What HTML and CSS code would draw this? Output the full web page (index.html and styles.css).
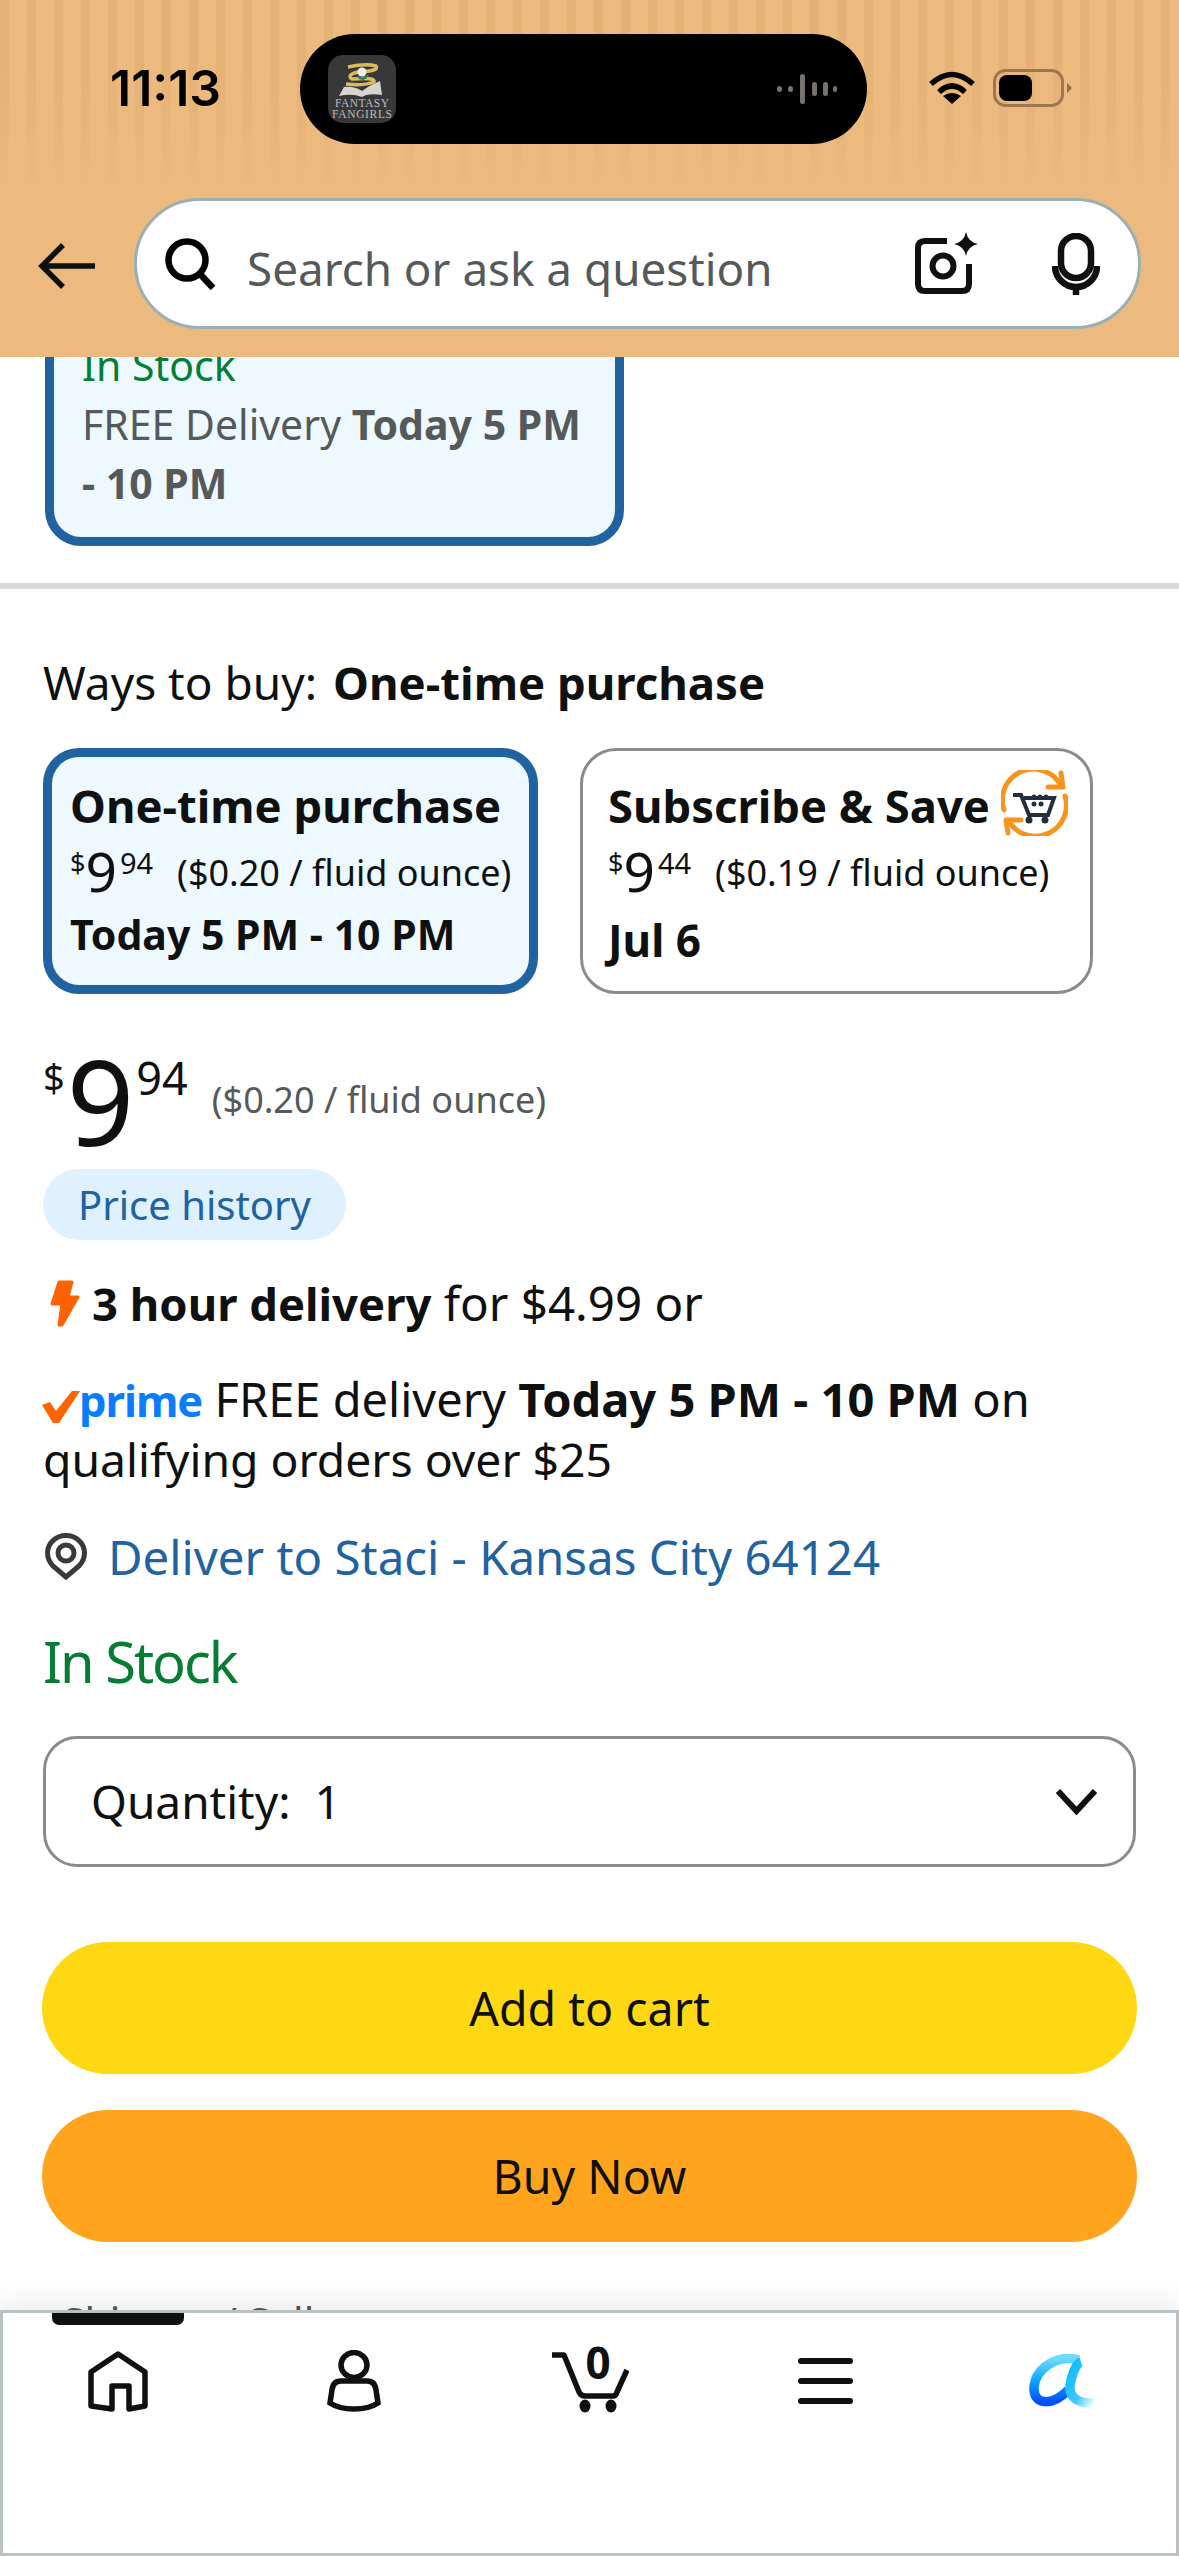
FILE: index.html
```html
<!DOCTYPE html>
<html lang="en">
<head>
<meta charset="utf-8">
<title>Product buying options</title>
<link rel="stylesheet" href="styles.css">
</head>
<body>
<div class="page">
  <header class="header">
    <div class="status">
      <span class="time">11:13</span>
      <div class="island">
        <svg class="app-icon" viewBox="0 0 68 68" width="68" height="68">
          <rect width="68" height="68" rx="15" fill="#38383a"/>
          <path d="M20 12 Q38 8 48 11 Q52 16 30 17 Q18 20 24 24 Q48 22 46 27 Q36 31 18 29" fill="none" stroke="#d9bb5c" stroke-width="3.5"/>
          <circle cx="34" cy="17" r="4.5" fill="#eee"/>
          <path d="M30 21 Q34 27 40 20" fill="none" stroke="#2f7d5d" stroke-width="2.5"/>
          <path d="M11 41 L16 32 Q26 31 34 36 Q42 30 52 26 L54 40 Q40 38 34 42 Q24 38 11 41Z" fill="#d8d4ce"/>
          <text x="34" y="52" class="app-text" text-anchor="middle" textLength="54">FANTASY</text>
          <text x="34" y="63" class="app-text" text-anchor="middle" textLength="60">FANGIRLS</text>
        </svg>
        <svg class="wave" viewBox="0 0 60 30" width="60" height="30" fill="#77736c">
          <rect x="0" y="12" width="5" height="6" rx="2.5"/>
          <rect x="11" y="12" width="5" height="6" rx="2.5"/>
          <rect x="23" y="0" width="5" height="30" rx="2.5"/>
          <rect x="35" y="8" width="5" height="14" rx="2.5"/>
          <rect x="46" y="8" width="5" height="14" rx="2.5"/>
          <rect x="56" y="12" width="4" height="6" rx="2"/>
        </svg>
      </div>
      <div class="status-right">
        <svg viewBox="0 0 48 36" width="48" height="36" fill="none" stroke="#000" stroke-width="5.5">
          <path d="M3 15 Q24 -4 45 15"/>
          <path d="M11 23 Q24 11 37 23"/>
          <path d="M15 27 Q24 21 33 27 L24 35Z" fill="#000" stroke="none"/>
        </svg>
        <svg class="battery" viewBox="0 0 79 38" width="79" height="38">
          <rect x="1.5" y="1.5" width="68" height="35" rx="11" fill="none" stroke="#9b7850" stroke-width="3"/>
          <rect x="6" y="6" width="33" height="26" rx="8" fill="#000"/>
          <path d="M74 14 L79 19 L74 24Z" fill="#8f7048"/>
        </svg>
      </div>
    </div>
    <div class="searchrow">
      <svg class="back" viewBox="0 0 57 46" width="57" height="46" fill="none" stroke="#0f1111" stroke-width="5.5">
        <path d="M57 23 H5"/>
        <path d="M25 2 L4 23 L25 44"/>
      </svg>
      <div class="searchbox">
        <svg viewBox="0 0 53 52" width="53" height="52" fill="none" stroke="#000" stroke-width="6.5">
          <circle cx="22" cy="22" r="18.5"/>
          <path d="M35 36 L48 50"/>
        </svg>
        <span class="placeholder">Search or ask a question</span>
        <svg class="cam" viewBox="0 0 64 64" width="64" height="64" fill="none" stroke="#0f1111" stroke-width="6">
          <path d="M32 9 H10 Q3 9 3 16 V52 Q3 59 10 59 H47 Q54 59 54 52 V32"/>
          <circle cx="28" cy="34" r="10.5"/>
          <path d="M51 0 Q53 10 63 12 Q53 14 51 24 Q49 14 39 12 Q49 10 51 0Z" fill="#0f1111" stroke="none"/>
        </svg>
        <svg class="mic" viewBox="0 0 48 62" width="48" height="62" fill="none" stroke="#0f1111" stroke-width="6.5">
          <rect x="9" y="3" width="30" height="42" rx="15"/>
          <path d="M3 33 A21 21 0 0 0 45 33"/>
          <path d="M24 54 V62"/>
        </svg>
      </div>
    </div>
  </header>

  <main class="content">
    <div class="option-card top-card">
      <div class="stock-small">In Stock</div>
      <div class="muted">FREE Delivery <b>Today 5 PM<br>- 10 PM</b></div>
    </div>
    <div class="divider"></div>

    <section class="buy">
      <div class="ways">Ways to buy: <b>One-time purchase</b></div>
      <div class="choices">
        <div class="choice selected">
          <div class="choice-title">One-time purchase</div>
          <div class="choice-price">
            <span class="p-cur">$</span><span class="p-main">9</span><span class="p-frac">94</span>
            <span class="unit">($0.20 / fluid ounce)</span>
          </div>
          <div class="choice-date">Today 5 PM - 10 PM</div>
        </div>
        <div class="choice">
          <div class="choice-title sub-title">Subscribe &amp; Save
            <svg class="sns" viewBox="0 0 67 66" width="67" height="66" fill="none">
              <g stroke="#f7941d" stroke-width="5" stroke-linecap="round" stroke-linejoin="round">
                <path d="M3 40 A31 31 0 0 1 60 16"/>
                <path d="M60 3 L62 17 L47 17"/>
                <path d="M64 26 A31 31 0 0 1 9 53"/>
                <path d="M7 63 L5 50 L20 50"/>
              </g>
              <path d="M12 25 H20 L28 45 H47 L53 28 H23" stroke="#232f3e" stroke-width="4"/>
              <circle cx="28" cy="50" r="3.5" fill="#232f3e"/>
              <circle cx="44" cy="50" r="3.5" fill="#232f3e"/>
              <g fill="#232f3e">
                <circle cx="33" cy="27" r="2.5"/><circle cx="39" cy="27" r="2.5"/><circle cx="45" cy="27" r="2.5"/>
                <circle cx="33" cy="34" r="2.5"/><circle cx="40" cy="34" r="2.5"/>
              </g>
            </svg>
          </div>
          <div class="choice-price">
            <span class="p-cur">$</span><span class="p-main">9</span><span class="p-frac">44</span>
            <span class="unit">($0.19 / fluid ounce)</span>
          </div>
          <div class="choice-date date-plain">Jul 6</div>
        </div>
      </div>

      <div class="price">
        <span class="big-cur">$</span><span class="big-main">9</span><span class="big-frac">94</span>
        <span class="unit unit-muted">($0.20 / fluid ounce)</span>
      </div>
      <div class="history">Price history</div>

      <div class="line hour">
        <svg viewBox="0 0 30 47" width="30" height="47">
          <path d="M9 2 H22 L18 17 H28 L12 45 H9 L12 24 H2Z" fill="#ff6200" stroke="#ff6200" stroke-width="3" stroke-linejoin="round"/>
        </svg>
        <span><b>3 hour delivery</b> for $4.99 or</span>
      </div>
      <div class="prime-block">
        <svg class="check" viewBox="0 0 38 33" width="38" height="33">
          <path d="M0 14 L8 11 L14 20 L30 0 H38 L17 32 H11Z" fill="#ff6200"/>
        </svg><span class="prime">prime</span> FREE delivery <b>Today 5 PM - 10 PM</b> on <span class="qual">qualifying orders over $25</span>
      </div>
      <div class="deliver">
        <svg viewBox="0 0 42 47" width="42" height="47" fill="none" stroke="#3a3a3a" stroke-width="5">
          <path d="M21 44 L8 33 Q2.5 27 2.5 20 A18.5 17.5 0 0 1 39.5 20 Q39.5 27 34 33Z"/>
          <circle cx="21" cy="20" r="8"/>
        </svg>
        <span>Deliver to Staci - Kansas City 64124</span>
      </div>
      <div class="stock">In Stock</div>
      <div class="quantity">
        <span>Quantity:&nbsp; 1</span>
        <svg viewBox="0 0 41 27" width="41" height="27" fill="none" stroke="#0f1111" stroke-width="6">
          <path d="M2 3 L20.5 23 L39 3"/>
        </svg>
      </div>
      <div class="btn btn-cart">Add to cart</div>
      <div class="btn btn-buy">Buy Now</div>
      <div class="seller">Shipper / Seller</div>
    </section>
  </main>

  <nav class="nav">
    <div class="tab-mark"></div>
    <div class="nav-row">
      <svg viewBox="0 0 60 61" width="60" height="61" fill="none" stroke="#0f1111" stroke-width="5.5" stroke-linejoin="round">
        <path d="M3 21 L30 3 L57 21 V55 L41 58 V35 H24 V58 L3 55Z" />
      </svg>
      <svg viewBox="0 0 54 62" width="54" height="62" fill="none" stroke="#0f1111" stroke-width="5.5">
        <ellipse cx="27" cy="15" rx="13" ry="12.5"/>
        <path d="M14 31 H40 Q48 31 49 40 L51 53 Q42 59 27 59 Q12 59 3 53 L5 40 Q6 31 14 31Z"/>
      </svg>
      <div class="cart">
        <svg viewBox="0 0 78 67" width="78" height="67" fill="none" stroke="#0f1111" stroke-width="5.5" stroke-linejoin="round">
          <path d="M1 9 H13 L28 46 Q30 50 34 50 H62 Q65 50 66 46 L76 24"/>
          <ellipse cx="34" cy="60" rx="5.5" ry="6.5" fill="#0f1111" stroke="none"/>
          <ellipse cx="60" cy="60" rx="5.5" ry="6.5" fill="#0f1111" stroke="none"/>
        </svg>
        <span class="cart-count">0</span>
      </div>
      <svg viewBox="0 0 55 46" width="55" height="46" fill="#0f1111">
        <rect width="55" height="6" rx="3"/>
        <rect y="20" width="55" height="6" rx="3"/>
        <rect y="40" width="55" height="6" rx="3"/>
      </svg>
      <svg viewBox="0 0 66 54" width="66" height="54" fill="none">
        <defs>
          <linearGradient id="al1" x1="0" y1="0" x2="0" y2="1">
            <stop offset="0" stop-color="#6fdcff"/>
            <stop offset=".5" stop-color="#0aa8ff"/>
            <stop offset="1" stop-color="#0050ff"/>
          </linearGradient>
          <linearGradient id="al2" x1="0" y1="0" x2="1" y2="1">
            <stop offset="0" stop-color="#06bcff"/>
            <stop offset=".6" stop-color="#43c8ff"/>
            <stop offset="1" stop-color="#ffffff"/>
          </linearGradient>
        </defs>
        <path d="M50 6 C28 0 7 14 5 33 C4 52 24 52 39 36" stroke="url(#al1)" stroke-width="9.5"/>
        <path d="M52 8 C46 10 42 24 41 32 C40 44 50 50 66 49" stroke="url(#al2)" stroke-width="9.5"/>
      </svg>
    </div>
  </nav>
</div>
</body>
</html>
```
FILE: styles.css
```css
* { box-sizing: border-box; }
html, body { margin: 0; padding: 0; background: #fff; }
body { font-family: "Noto Sans", sans-serif; color: #0f1111; font-size: 46px; line-height: 59px; }
b { font-weight: 700; }

.page { width: 1179px; height: 2556px; display: flex; flex-direction: column; overflow: hidden; position: relative; }

/* header */
.header { height: 357px; flex: none; background: #ecb97f; position: relative; z-index: 2; }
.header::before {
  content: ""; position: absolute; inset: 0;
  background: repeating-linear-gradient(90deg, rgba(205,135,65,.15) 0 9px, transparent 9px 27px);
  -webkit-mask-image: linear-gradient(#000 0, #000 70px, transparent 190px);
  mask-image: linear-gradient(#000 0, #000 70px, transparent 190px);
}
.status { position: relative; height: 198px; }
.time { position: absolute; left: 110px; top: 60px; font: 600 50px/56px Inter, sans-serif; color: #000; }
.island { position: absolute; left: 300px; top: 34px; width: 567px; height: 110px; border-radius: 55px; background: #000; display: flex; align-items: center; justify-content: space-between; padding: 0 30px 0 28px; }
.app-text { font: 500 11.5px "Liberation Serif", serif; fill: #bdbbb6; }
.status-right { position: absolute; left: 928px; top: 69px; display: flex; gap: 17px; }

.searchrow { position: relative; display: flex; align-items: center; gap: 39px; padding-left: 38px; }
.back { flex: none; margin-top: 4px; }
.searchbox { width: 1007px; height: 131px; background: #fff; border: 3px solid #9ab0b5; border-radius: 65px; display: flex; align-items: center; padding: 0 38px 0 28px; }
.placeholder { margin-left: 29px; flex: 1; color: #565959; font-size: 45.8px; padding-top: 10px; }
.mic { margin-left: 73px; }

/* content */
.content { flex: 1; min-height: 0; overflow: hidden; }
.option-card { border: 9px solid #2162a1; background: #edf8ff; border-radius: 36px; }
.top-card { width: 579px; margin: -40px 0 0 45px; padding: 10px 0 24px 28px; }
.stock-small { color: #067d35; font-size: 41px; }
.muted { color: #565959; font-size: 41px; }
.divider { height: 6px; margin-top: 37px; background: #d5d9d9; }

.buy { padding: 64px 42px 0 43px; }
.ways b { font-size: 45.5px; margin-left: 4px; }

.choices { display: flex; gap: 42px; margin-top: 36px; }
.choice { height: 246px; width: 513px; border: 3px solid #888c8c; border-radius: 36px; padding: 25px 0 0 25px; }
.choice.selected { width: 495px; border: 9px solid #2162a1; background: #edf8ff; padding: 19px 0 0 18px; }
.choice-title { font-weight: 700; font-size: 45.4px; line-height: 59px; }
.sub-title { display: flex; align-items: center; gap: 11px; white-space: nowrap; }
.sns { flex: none; margin: -6px 0 -1px; }
.choice-price { display: flex; align-items: flex-start; margin-top: 3px; height: 62px; line-height: 62px; white-space: nowrap; }
.p-cur { font-size: 27px; line-height: 49px; }
.p-main { font-size: 55px; line-height: 66px; }
.p-frac { font-size: 29px; line-height: 49px; margin-left: 3px; }
.unit { font-size: 36px; margin-left: 24px; line-height: 70px; }
.choice-date { font-weight: 700; font-size: 41px; line-height: 59px; margin-top: 5px; }
.date-plain { margin-top: 11px; font-size: 44px; }

.price { display: flex; align-items: flex-start; height: 105px; margin-top: 52px; white-space: nowrap; }
.big-cur { font-size: 38px; line-height: 62px; }
.big-main { font-size: 118px; line-height: 109px; margin-left: 2px; }
.big-frac { font-size: 45px; line-height: 64px; margin-left: 2px; }
.unit-muted { color: #565959; margin-left: 24px; line-height: 108px; }
.history { display: inline-block; margin-top: 18px; height: 71px; padding: 0 35px; line-height: 71px; border-radius: 36px; background: #dff1ff; color: #2162a1; font-size: 40px; }

.line { display: flex; align-items: center; }
.hour { margin-top: 33px; gap: 12px; margin-left: 7px; font-size: 47.5px; }
.hour b { font-size: 45.4px; }
.prime-block { margin-top: 37px; margin-right: 30px; font-size: 47px; }
.qual { font-size: 46.3px; }
.check { vertical-align: -7px; margin-left: -1px; }
.prime { color: #0a7cff; font-weight: 700; font-size: 43.5px; letter-spacing: -1px; margin-left: -1px; }
.deliver { display: flex; align-items: center; gap: 21px; margin-top: 38px; margin-left: 2px; color: #2162a1; font-size: 47.4px; }
.stock { color: #067d35; font-size: 56px; line-height: 70px; margin-top: 40px; letter-spacing: -2px; }
.quantity { display: flex; align-items: center; justify-content: space-between; height: 131px; margin-top: 40px; margin-right: 1px; border: 3px solid #888c8c; border-radius: 34px; padding: 0 36px 0 45px; }
.btn { height: 132px; border-radius: 66px; display: flex; align-items: center; justify-content: center; font-size: 46.5px; }
.btn-cart { margin-top: 75px; background: #ffd814; margin-left: -1px; }
.btn-buy { margin-top: 36px; background: #ffa41c; margin-left: -1px; }
.seller { margin-top: 51px; padding-left: 19px; color: #565959; font-size: 41px; line-height: 59px; }

/* bottom nav */
.nav { flex: none; height: 246px; position: relative; z-index: 2; background: #fff; border: 3px solid #b9c1c4; box-shadow: 0 -10px 24px rgba(15,17,17,.07); }
.tab-mark { position: absolute; left: 49px; top: 0; width: 132px; height: 12px; background: #0f1111; border-radius: 0 0 7px 7px; }
.nav-row { display: grid; grid-template-columns: repeat(5, 236px); justify-content: center; justify-items: center; align-items: center; height: 70px; margin-top: 33px; }
.cart { position: relative; width: 78px; height: 67px; margin-bottom: 3px; }
.cart svg { display: block; }
.cart-count { position: absolute; left: 35px; top: -8px; font-weight: 700; font-size: 44px; line-height: 48px; }
```
